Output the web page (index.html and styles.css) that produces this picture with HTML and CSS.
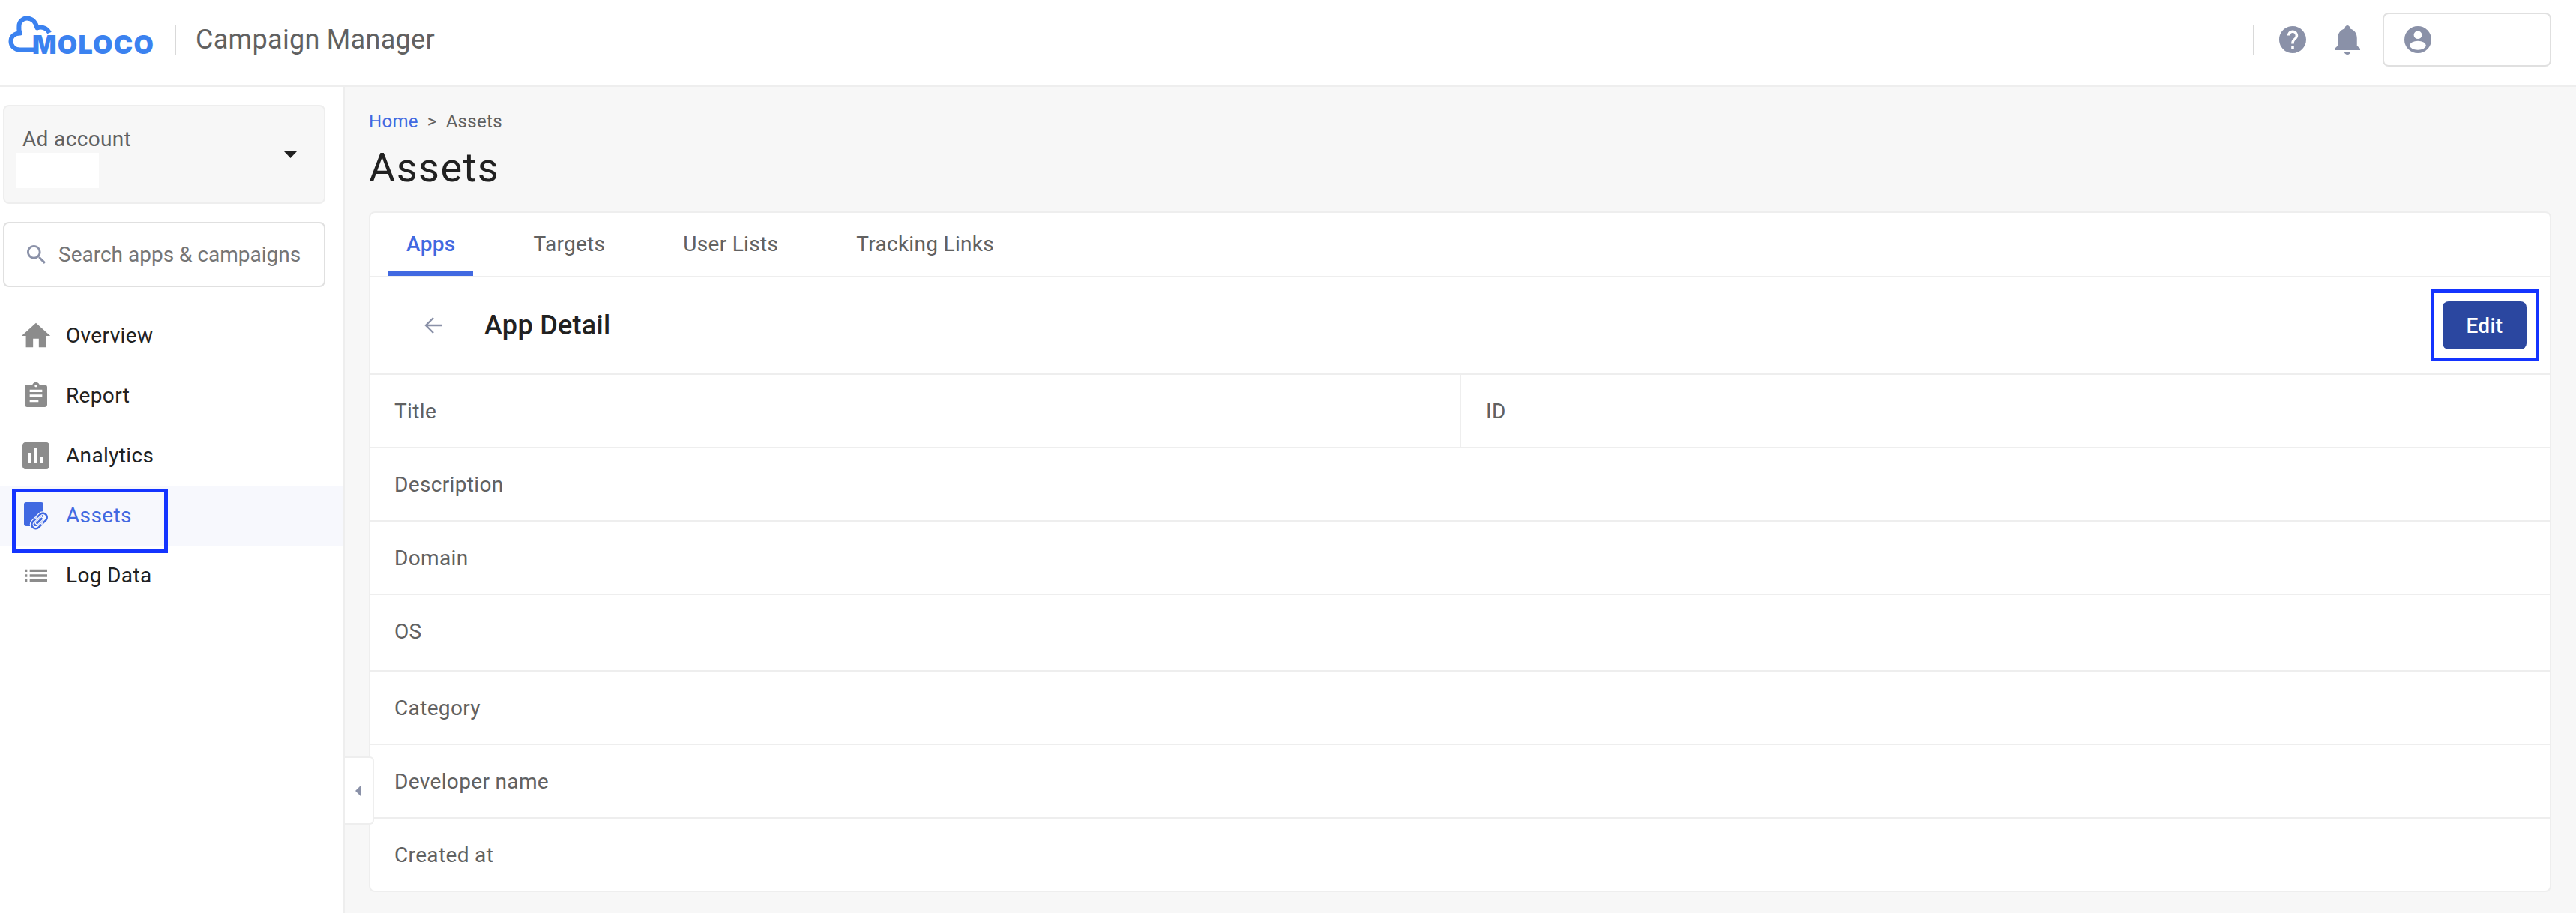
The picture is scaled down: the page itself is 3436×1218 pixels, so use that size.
FILE: index.html
```html
<!DOCTYPE html>
<html lang="en">
<head>
<meta charset="utf-8">
<title>Campaign Manager - Assets</title>
<link rel="stylesheet" href="styles.css">
</head>
<body>
<header class="topbar">
  <div class="topbar-left">
    <div class="logo">
      <svg class="logo-cloud" viewBox="0 0 72 72" width="72" height="72"><path d="M45 66.500H27C19 66.500 14.500 61 14.500 55.500C14.500 49 19 44.500 27 44.500C24.500 41 25.500 37 25.500 34.500C25.500 28.500 31 24.500 36 24.500C43 24.500 48 30 49.500 37.500C56 35 63 38 66 44" fill="none" stroke="#3b82f0" stroke-width="6" stroke-linecap="butt" stroke-linejoin="round"/></svg>
      <span class="logo-text">MOLOCO</span>
    </div>
    <span class="vsep logo-sep"></span>
    <span class="product">Campaign Manager</span>
  </div>
  <div class="topbar-right">
    <span class="vsep"></span>
    <svg class="ico-help" viewBox="2 2 20 20"><path d="M12 2C6.480 2 2 6.480 2 12s4.480 10 10 10 10-4.480 10-10S17.520 2 12 2zm1 17h-2v-2h2v2zm2.070-7.750l-.9.920C13.450 12.900 13 13.500 13 15h-2v-.5c0-1.100.450-2.100 1.170-2.830l1.240-1.260c.37-.36.59-.86.59-1.410 0-1.100-.9-2-2-2s-2 .9-2 2H8c0-2.210 1.790-4 4-4s4 1.790 4 4c0 .88-.36 1.680-.93 2.250z"/></svg>
    <svg class="ico-bell" viewBox="4 2.500 16 19.500" preserveAspectRatio="none"><path d="M12 22c1.100 0 2-.9 2-2h-4c0 1.100.89 2 2 2zm6-6v-5c0-3.070-1.640-5.640-4.500-6.320V4c0-.83-.67-1.500-1.500-1.500s-1.500.67-1.500 1.500v.68C7.630 5.360 6 7.920 6 11v5l-2 2v1h16v-1l-2-2z"/></svg>
    <div class="user-box">
      <svg class="ico-user" viewBox="2 2 20 20"><circle cx="12" cy="12" r="10"/><circle cx="12" cy="8.500" r="3" fill="#fff"/><ellipse cx="12" cy="16.300" rx="6" ry="3.300" fill="#fff"/></svg>
    </div>
  </div>
</header>

<div class="shell">
  <aside class="sidebar">
    <div class="account">
      <div class="account-text">
        <span class="account-label">Ad account</span>
        <span class="account-redact"></span>
      </div>
      <svg class="account-caret" viewBox="0 0 17 9"><path d="M0 0h17L8.500 9z"/></svg>
    </div>
    <div class="search">
      <svg class="ico-search" viewBox="3 3 17.500 17.500"><path d="M15.500 14h-.79l-.28-.27C15.410 12.590 16 11.110 16 9.500 16 5.910 13.090 3 9.500 3S3 5.910 3 9.500 5.910 16 9.500 16c1.610 0 3.090-.59 4.230-1.570l.27.28v.79l5 4.990L20.490 19l-4.990-5zm-6 0C7.010 14 5 11.990 5 9.500S7.010 5 9.500 5 14 7.010 14 9.500 11.990 14 9.500 14z"/></svg>
      <span class="search-text">Search apps &amp; campaigns</span>
    </div>
    <nav class="nav">
      <a class="nav-item">
        <span class="nav-ico"><svg class="i46" viewBox="0 0 24 24"><path d="M10 20v-6h4v6h5v-8h3L12 3 2 12h3v8z"/></svg></span>
        <span class="nav-label">Overview</span>
      </a>
      <a class="nav-item">
        <span class="nav-ico"><svg class="i40" viewBox="0 0 24 24"><path d="M19 3h-4.180C14.400 1.840 13.300 1 12 1c-1.300 0-2.400.84-2.820 2H5c-1.100 0-2 .9-2 2v14c0 1.100.9 2 2 2h14c1.100 0 2-.9 2-2V5c0-1.100-.9-2-2-2zm-7 0c.55 0 1 .45 1 1s-.45 1-1 1-1-.45-1-1 .45-1 1-1zm2 14H7v-2h7v2zm3-4H7v-2h10v2zm0-4H7V7h10v2z"/></svg></span>
        <span class="nav-label">Report</span>
      </a>
      <a class="nav-item">
        <span class="nav-ico"><svg class="i48" viewBox="0 0 24 24"><path d="M19 3H5c-1.100 0-2 .9-2 2v14c0 1.100.9 2 2 2h14c1.100 0 2-.9 2-2V5c0-1.100-.9-2-2-2zM9 17H7v-7h2v7zm4 0h-2V7h2v10zm4 0h-2v-4h2v4z"/></svg></span>
        <span class="nav-label">Analytics</span>
      </a>
      <a class="nav-item nav-item-active">
        <span class="nav-ico nav-ico-assets">
          <svg class="i-assets" viewBox="0 0 36 40"><rect x="0" y="0" width="26" height="32" rx="3" fill="#4169e1"/><g transform="translate(20.500 25) rotate(-45) scale(1.350)"><path transform="translate(-12 -12)" d="M3.900 12c0-1.710 1.390-3.100 3.100-3.100h4V7H7c-2.760 0-5 2.240-5 5s2.240 5 5 5h4v-1.900H7c-1.710 0-3.100-1.390-3.100-3.100zM8 13h8v-2H8v2zm9-6h-4v1.900h4c1.710 0 3.100 1.390 3.100 3.100s-1.390 3.100-3.100 3.100h-4V17h4c2.760 0 5-2.240 5-5s-2.240-5-5-5z" fill="#4169e1" stroke="#f7f8fd" stroke-width="1.800" paint-order="stroke"/></g></svg>
        </span>
        <span class="nav-label">Assets</span>
        <span class="mark mark-nav"></span>
      </a>
      <a class="nav-item">
        <span class="nav-ico"><svg class="i40" viewBox="0 0 24 24"><path d="M3 13h2v-2H3v2zm0 4h2v-2H3v2zm0-8h2V7H3v2zm4 4h14v-2H7v2zm0 4h14v-2H7v2zM7 7v2h14V7H7z"/></svg></span>
        <span class="nav-label">Log Data</span>
      </a>
    </nav>
  </aside>

  <main class="main">
    <button class="collapse" type="button" aria-label="Collapse">
      <svg viewBox="0 0 8 16" width="8" height="16"><path d="M8 0v16L0 8z"/></svg>
    </button>
    <div class="crumbs">
      <a class="crumb-link">Home</a>
      <span class="crumb-sep">&gt;</span>
      <span class="crumb-current">Assets</span>
    </div>
    <h1 class="page-title">Assets</h1>
    <section class="card">
      <div class="tabs">
        <a class="tab tab-active">Apps</a>
        <a class="tab">Targets</a>
        <a class="tab">User Lists</a>
        <a class="tab">Tracking Links</a>
      </div>
      <div class="detail-head">
        <div class="detail-title">
          <svg class="ico-back" viewBox="0 0 26 24"><path d="M25 12H3M13 2L3 12l10 10" fill="none" stroke="#8a91a8" stroke-width="2.400"/></svg>
          <h2>App Detail</h2>
        </div>
        <div class="edit-wrap">
          <button class="edit" type="button">Edit</button>
          <span class="mark mark-edit"></span>
        </div>
      </div>
      <div class="row row-split">
        <div class="cell">Title</div>
        <div class="cell cell-right">ID</div>
      </div>
      <div class="row"><div class="cell">Description</div></div>
      <div class="row"><div class="cell">Domain</div></div>
      <div class="row row-tall"><div class="cell">OS</div></div>
      <div class="row"><div class="cell">Category</div></div>
      <div class="row"><div class="cell">Developer name</div></div>
      <div class="row row-last"><div class="cell">Created at</div></div>
    </section>
  </main>
</div>
</body>
</html>
```
FILE: styles.css
```css
* { box-sizing: border-box; }
html, body { margin: 0; height: 1218px; overflow: hidden; }
body { font-family: Roboto, "Liberation Sans", sans-serif; font-size: 28px; color: #212121; background: #fff; }
svg { display: block; }

.topbar { height: 116px; display: flex; justify-content: space-between; align-items: center; padding: 0 33px 8px 0; border-bottom: 2px solid #eeeeee; }
.topbar-left, .topbar-right { display: flex; align-items: center; }
.logo { position: relative; width: 207px; height: 52px; padding: 19px 0 0 43px; }
.logo-cloud { position: absolute; left: 0; top: -27px; }
.logo-text { display: block; font-family: Inter, sans-serif; font-weight: 900; font-size: 34px; line-height: 27px; letter-spacing: 1.300px; color: #3b82f0; }
.vsep { display: block; width: 2px; height: 40px; background: #d9d9d9; }
.logo-sep { margin-left: 26px; }
.product { margin-left: 26px; font-size: 36px; line-height: 44px; letter-spacing: 0.300px; color: #616161; }
.topbar-right svg { fill: #8a91a8; }
.ico-help { width: 36px; height: 36px; margin-left: 33px; }
.ico-bell { width: 34px; height: 39px; margin-left: 38px; }
.user-box { width: 225px; height: 72px; margin-left: 30px; padding-left: 27px; display: flex; align-items: center; border: 2px solid #e0e0e0; border-radius: 8px; background: #fff; }
.ico-user { width: 36px; height: 36px; }

.shell { display: flex; height: 1102px; }
.sidebar { width: 460px; flex: none; padding-top: 24px; border-right: 2px solid #eeeeee; background: #fff; }
.account { height: 132px; margin: 0 24px 24px 4px; padding: 0 36px 0 15px; display: flex; align-items: center; justify-content: space-between; background: #f7f7f7; border: 2px solid #eeeeee; border-radius: 8px; }
.account-text { display: flex; flex-direction: column; margin-top: 7px; }
.account-label { margin-left: 9px; font-size: 28px; line-height: 36px; letter-spacing: 0.350px; color: #616161; }
.account-redact { width: 111px; height: 47px; background: #fff; }
.account-caret { width: 17px; height: 9px; fill: #212121; }
.search { height: 87px; margin: 0 24px 25px 4px; padding-left: 30px; display: flex; align-items: center; border: 2px solid #e0e0e0; border-radius: 8px; background: #fff; }
.ico-search { width: 25px; height: 25px; fill: #8a91a8; }
.search-text { margin-left: 17px; font-size: 28px; line-height: 36px; letter-spacing: 0; color: #757575; }
.nav { display: flex; flex-direction: column; }
.nav-item { position: relative; height: 80px; padding-left: 24px; display: flex; align-items: center; color: #212121; }
.nav-ico { width: 48px; height: 48px; display: flex; align-items: center; justify-content: center; fill: #8c8c8c; }
.i46 { width: 46px; height: 46px; }
.i40 { width: 40px; height: 40px; }
.i48 { width: 48px; height: 48px; }
.i-assets { width: 36px; height: 40px; }
.nav-label { margin-left: 16px; font-size: 28px; line-height: 36px; letter-spacing: 0.350px; }
.nav-item-active { background: #f7f8fd; color: #4169e1; align-items: flex-start; padding-top: 22px; }
.nav-ico-assets { height: 40px; align-items: flex-start; padding-left: 4px; margin-top: 0; }
.mark { position: absolute; border: 5px solid #1434ff; pointer-events: none; }
.mark-nav { left: 16px; top: 4px; width: 208px; height: 86px; }

.main { position: relative; flex: 1; min-width: 0; padding: 0 33px 0 32px; background: #f7f7f7; }
.collapse { position: absolute; left: 0; top: 893px; width: 39px; height: 91px; padding: 0 0 0 14px; display: flex; align-items: center; background: #fff; border: 2px solid #eeeeee; border-left: 0; border-radius: 0 6px 6px 0; fill: #8a91a8; }
.crumbs { display: flex; align-items: center; height: 30px; margin-top: 31px; font-size: 24px; line-height: 30px; letter-spacing: 0.300px; color: #616161; }
.crumb-link { color: #4169e1; }
.crumb-sep { margin: 0 12px; }
.page-title { margin: 15px 0 0; font-size: 54px; font-weight: 400; line-height: 64px; letter-spacing: 1.500px; color: #212121; }
.card { margin-top: 26px; height: 908px; background: #fff; border: 2px solid #eeeeee; border-radius: 8px; }
.tabs { height: 86px; padding-left: 24px; display: flex; gap: 56px; border-bottom: 2px solid #eeeeee; }
.tab { height: 82px; padding: 0 24px; display: flex; align-items: center; font-size: 28px; letter-spacing: 0.300px; color: #616161; }
.tab-active { height: 84px; padding-top: 4px; color: #4169e1; font-weight: 500; border-bottom: 6px solid #4169e1; }
.detail-head { height: 130px; padding: 0 31px 0 0; display: flex; align-items: center; justify-content: space-between; border-bottom: 2px solid #eeeeee; }
.detail-title { display: flex; align-items: center; }
.ico-back { width: 26px; height: 24px; margin-left: 71px; }
.detail-title h2 { margin: 0 0 0 55px; font-size: 36px; font-weight: 500; line-height: 44px; letter-spacing: 0.300px; color: #212121; }
.edit-wrap { position: relative; }
.edit { display: block; width: 112px; height: 64px; padding: 0; border: 0; border-radius: 8px; background: #2b47a0; color: #fff; font-family: inherit; font-size: 28px; font-weight: 500; letter-spacing: 0.300px; }
.mark-edit { left: -16px; top: -16px; width: 145px; height: 96px; }
.row { height: 98px; display: flex; border-bottom: 2px solid #eeeeee; }
.row-tall { height: 102px; padding-bottom: 4px; }
.row-last { border-bottom: 0; height: 96px; }
.cell { flex: 1; padding-left: 32px; display: flex; align-items: center; font-size: 28px; letter-spacing: 0.350px; color: #616161; }
.row-split .cell { flex: none; width: 1453px; }
.row-split .cell-right { flex: 1; width: auto; padding-left: 33px; border-left: 2px solid #eeeeee; }
```
